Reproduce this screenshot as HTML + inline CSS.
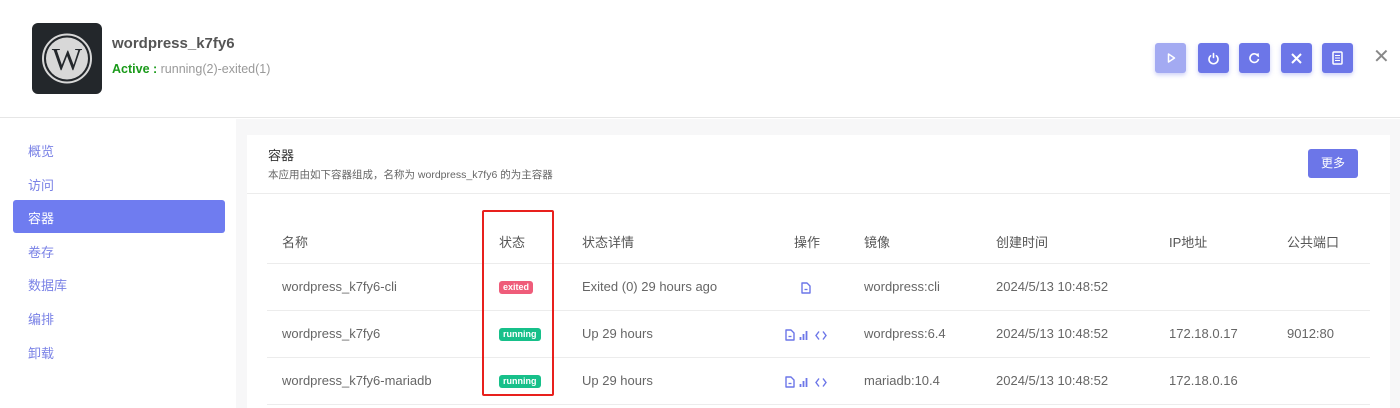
<!DOCTYPE html>
<html><head><meta charset="utf-8"><style>
*{margin:0;padding:0;box-sizing:border-box}
body{width:1400px;height:408px;overflow:hidden;background:#fff;font-family:"Liberation Sans","Noto Sans CJK SC",sans-serif;position:relative}
.a{position:absolute}
.hdr{left:0;top:0;width:1400px;height:118px;border-bottom:1px solid #e6e6e6;background:#fff}
.logo{left:32px;top:23px;width:70px;height:71px;background:#23272b;border-radius:6px}
.btn{top:43px;width:31px;height:30px;background:#6c76e8;border-radius:3px;box-shadow:0 2px 4px rgba(108,118,232,.35)}
.side a{position:absolute;left:28px;font-size:13px;color:#7a82e6;text-decoration:none}
.main{left:236px;top:119px;width:1164px;height:289px;background:#f7f7f8}
.card{left:247px;top:135px;width:1143px;height:273px;background:#fff}
.t{font-size:13px;color:#666;position:absolute}
.th{font-size:13px;color:#555;position:absolute;top:232px}
.line{position:absolute;left:267px;width:1103px;height:1px;background:#ececec}
.badge{position:absolute;left:499px;height:13px;padding:0 4px;border-radius:3px;color:#fff;font-size:9px;font-weight:bold;line-height:13px}
.ic{position:absolute}
</style></head><body>
<div class="a hdr"></div>
<div class="a logo"><svg width="70" height="71" viewBox="0 0 70 71"><circle cx="35" cy="35.5" r="24" fill="none" stroke="#d8d8d8" stroke-width="2"/><circle cx="35" cy="35.5" r="21" fill="#d8d8d8"/><text x="35" y="47" text-anchor="middle" font-family="Liberation Serif,serif" font-size="32" fill="#23272b">W</text></svg></div>
<div class="a" style="left:112px;top:35px;font-size:15px;font-weight:bold;color:#555">wordpress_k7fy6</div>
<div class="a" style="left:112px;top:62px;font-size:12.5px;color:#999"><b style="color:#1a9a1a">Active :</b> running(2)-exited(1)</div>
<div class="a btn" style="left:1155px;background:#a3aaf2"><svg width="31" height="30"><path d="M13.5 11v8l6-4z" stroke="#fff" stroke-width="1.5" fill="none" stroke-linejoin="round"/></svg></div>
<div class="a btn" style="left:1198px"><svg width="31" height="30"><path d="M12.6 12.8a4.5 4.5 0 1 0 5.8 0M15.5 10.5v4" stroke="#fff" stroke-width="1.6" fill="none" stroke-linecap="round"/></svg></div>
<div class="a btn" style="left:1239px"><svg width="31" height="30"><path d="M19 13a4.3 4.3 0 1 0 .5 3" stroke="#fff" stroke-width="1.6" fill="none"/><path d="M17 11.5l2.5 1.8-.3-3" fill="#fff" stroke="#fff"/></svg></div>
<div class="a btn" style="left:1281px"><svg width="31" height="30"><path d="M11 11l9 9M20 11l-9 9" stroke="#fff" stroke-width="2"/></svg></div>
<div class="a btn" style="left:1322px"><svg width="31" height="30"><rect x="11" y="9" width="9" height="12" rx="1" fill="none" stroke="#fff" stroke-width="1.5"/><path d="M13 12.5h5M13 15h5M13 17.5h5" stroke="#fff"/></svg></div>
<div class="a" style="left:1373px;top:47px;font-size:20px;color:#888;line-height:20px">✕</div>
<div class="side">
<a style="top:141px">概览</a><a style="top:175px">访问</a>
<div class="a" style="left:13px;top:200px;width:212px;height:33px;background:#6f7cf0;border-radius:3px"></div>
<a style="top:208px;color:#fff">容器</a><a style="top:242px">卷存</a><a style="top:275px">数据库</a><a style="top:309px">编排</a><a style="top:343px">卸载</a>
</div>
<div class="a main"></div>
<div class="a card"></div>
<div class="a" style="left:268px;top:145px;font-size:13px;color:#333">容器</div>
<div class="a" style="left:268px;top:167px;font-size:10.5px;color:#666">本应用由如下容器组成，名称为 wordpress_k7fy6 的为主容器</div>
<div class="a" style="left:1308px;top:149px;width:50px;height:29px;background:#6c76e8;border-radius:3px;color:#fff;font-size:12px;text-align:center;line-height:29px">更多</div>
<div class="a" style="left:247px;top:193px;width:1143px;height:1px;background:#ececec"></div>
<div class="th" style="left:282px">名称</div><div class="th" style="left:499px">状态</div><div class="th" style="left:582px">状态详情</div><div class="th" style="left:794px">操作</div><div class="th" style="left:864px">镜像</div><div class="th" style="left:996px">创建时间</div><div class="th" style="left:1169px">IP地址</div><div class="th" style="left:1287px">公共端口</div>
<div class="line" style="top:263px"></div><div class="line" style="top:310px"></div><div class="line" style="top:357px"></div><div class="line" style="top:404px"></div>
<svg width="0" height="0" style="position:absolute"><defs>
<g id="doc"><path d="M1 1h5l3 3v7H1z" fill="none" stroke="#6c76e8" stroke-width="1.4" stroke-linejoin="round"/><path d="M3.5 7.5h3" stroke="#6c76e8" stroke-width="1.3"/></g>
<g id="bar"><path d="M1.5 11V8M4.5 11V5M7.5 11V2" stroke="#6c76e8" stroke-width="1.8"/></g>
<g id="code"><path d="M4 2.5L1 6.5l3 4M8 2.5l3 4-3 4" stroke="#6c76e8" stroke-width="1.4" fill="none"/></g>
</defs></svg>
<div class="t" style="left:282px;top:279px">wordpress_k7fy6-cli</div>
<div class="badge" style="top:281px;background:#ef5c7a">exited</div>
<div class="t" style="left:582px;top:279px">Exited (0) 29 hours ago</div>
<svg class="ic" style="left:801px;top:282px" width="12" height="12"><use href="#doc"/></svg>
<div class="t" style="left:864px;top:279px">wordpress:cli</div>
<div class="t" style="left:996px;top:279px">2024/5/13 10:48:52</div>
<div class="t" style="left:282px;top:326px">wordpress_k7fy6</div>
<div class="badge" style="top:328px;background:#17c08a">running</div>
<div class="t" style="left:582px;top:326px">Up 29 hours</div>
<svg class="ic" style="left:785px;top:329px" width="46" height="12"><use href="#doc"/><use href="#bar" x="14"/><use href="#code" x="30"/></svg>
<div class="t" style="left:864px;top:326px">wordpress:6.4</div>
<div class="t" style="left:996px;top:326px">2024/5/13 10:48:52</div>
<div class="t" style="left:1169px;top:326px">172.18.0.17</div>
<div class="t" style="left:1287px;top:326px">9012:80</div>
<div class="t" style="left:282px;top:373px">wordpress_k7fy6-mariadb</div>
<div class="badge" style="top:375px;background:#17c08a">running</div>
<div class="t" style="left:582px;top:373px">Up 29 hours</div>
<svg class="ic" style="left:785px;top:376px" width="46" height="12"><use href="#doc"/><use href="#bar" x="14"/><use href="#code" x="30"/></svg>
<div class="t" style="left:864px;top:373px">mariadb:10.4</div>
<div class="t" style="left:996px;top:373px">2024/5/13 10:48:52</div>
<div class="t" style="left:1169px;top:373px">172.18.0.16</div>
<div class="a" style="left:482px;top:210px;width:72px;height:186px;border:2px solid #e8201d;border-radius:2px"></div>
</body></html>
